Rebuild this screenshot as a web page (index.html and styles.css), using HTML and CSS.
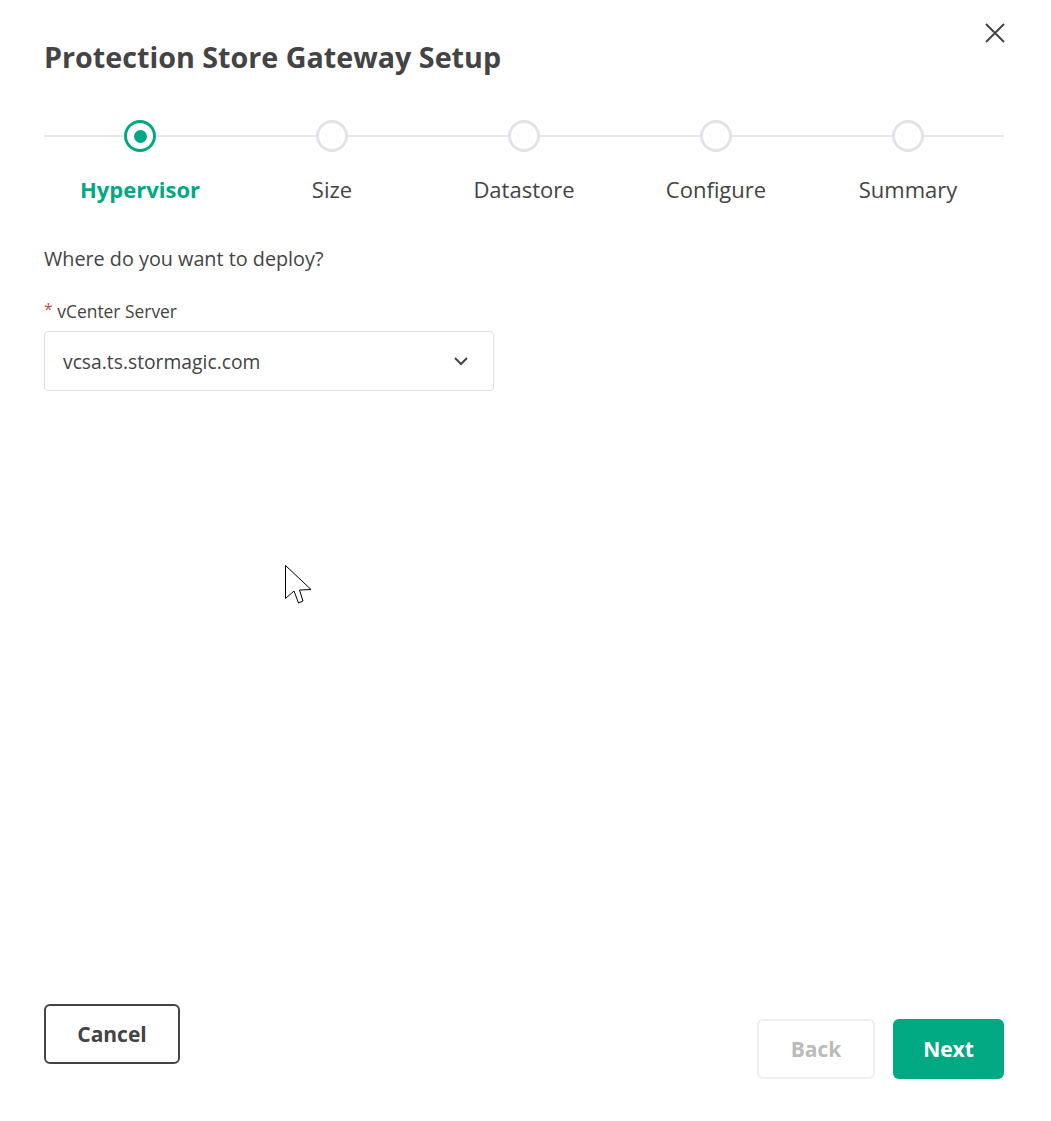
FILE: index.html
```html
<!DOCTYPE html>
<html lang="en">
<head>
    <meta charset="UTF-8">
    <meta name="viewport" content="width=device-width, initial-scale=1.0">
    <title>Protection Store Gateway Setup</title>
    <link rel="stylesheet" href="styles.css">
</head>
<body>
    <div class="dialog">
        <div class="header">
            <h1>Protection Store Gateway Setup</h1>
            <button class="close-btn" aria-label="Close">
                <svg width="20" height="20" viewBox="0 0 20 20">
                    <path d="M1 1 L19 19 M19 1 L1 19" stroke="#444" stroke-width="2" fill="none"/>
                </svg>
            </button>
        </div>

        <ol class="stepper">
            <li class="step active"><span class="dot"></span><span class="step-label">Hypervisor</span></li>
            <li class="step"><span class="dot"></span><span class="step-label">Size</span></li>
            <li class="step"><span class="dot"></span><span class="step-label">Datastore</span></li>
            <li class="step"><span class="dot"></span><span class="step-label">Configure</span></li>
            <li class="step"><span class="dot"></span><span class="step-label">Summary</span></li>
        </ol>

        <div class="content">
            <p class="question">Where do you want to deploy?</p>

            <label class="field-label" for="vcenter"><span class="required">*</span> vCenter Server</label>
            <div class="select" id="vcenter">
                <span>vcsa.ts.stormagic.com</span>
                <svg width="16" height="10" viewBox="0 0 16 10">
                    <path d="M2 2 L8 8 L14 2" stroke="#444" stroke-width="2" fill="none"/>
                </svg>
            </div>
        </div>

        <div class="footer">
            <button class="btn btn-cancel">Cancel</button>
            <div class="nav-buttons">
                <button class="btn btn-back" disabled>Back</button>
                <button class="btn btn-next">Next</button>
            </div>
        </div>

        <svg class="cursor" width="40" height="50" viewBox="0 0 40 50">
            <path d="M5.5 5.5 L5.5 38.5 L14 31 L18.5 43 L23 41 L19.5 30 L31 29.5 Z" fill="#fff" stroke="#000" stroke-width="1"/>
        </svg>
    </div>
</body>
</html>
```

FILE: styles.css
```css
body {
    margin: 0;
    font-family: "Open Sans", "Noto Sans", sans-serif;
    color: #444;
    background: #fff;
}

.dialog {
    position: relative;
    box-sizing: border-box;
    height: 1121px;
    padding: 0 47px 42px 44px;
    display: flex;
    flex-direction: column;
}

.header {
    display: flex;
    justify-content: space-between;
    align-items: flex-start;
    padding-top: 23px;
}

.header h1 {
    margin: 16px 0 0 0;
    font-size: 28.7px;
    line-height: 36px;
    font-weight: 700;
    color: #444;
}

.close-btn {
    width: 20px;
    height: 20px;
    padding: 0;
    margin-right: -1px;
    border: none;
    background: none;
    cursor: pointer;
}

.close-btn svg {
    display: block;
}

.stepper {
    position: relative;
    display: flex;
    list-style: none;
    margin: 45px 0 0 0;
    padding: 0;
}

.stepper::before {
    content: "";
    position: absolute;
    left: 0;
    right: 0;
    top: 15px;
    height: 2px;
    background-color: #e6e7eb;
}

.step {
    position: relative;
    flex: 1;
    display: flex;
    flex-direction: column;
    align-items: center;
    gap: 23px;
}

.dot {
    box-sizing: border-box;
    width: 32px;
    height: 32px;
    border: 3px solid #e1e3e8;
    border-radius: 50%;
    background: #fff;
    display: flex;
    justify-content: center;
    align-items: center;
}

.step-label {
    font-size: 22px;
    line-height: 28px;
    color: #444;
}

.step.active .dot {
    border-color: #01a982;
}

.step.active .dot::after {
    content: "";
    width: 13px;
    height: 13px;
    border-radius: 50%;
    background-color: #01a982;
}

.step.active .step-label {
    color: #01a982;
    font-weight: 700;
}

.content {
    flex: 1;
    display: flex;
    flex-direction: column;
    align-items: flex-start;
}

.question {
    margin: 44px 0 0 0;
    font-size: 19.8px;
    line-height: 24px;
}

.field-label {
    margin-top: 29px;
    font-size: 17.4px;
    line-height: 22px;
}

.required {
    color: #c54e4b;
    font-size: 16px;
    vertical-align: top;
    line-height: 18px;
}

.select {
    box-sizing: border-box;
    width: 450px;
    height: 60px;
    margin-top: 9px;
    padding: 0 24px 0 18px;
    border: 1px solid #e0e0e0;
    border-radius: 4px;
    display: flex;
    justify-content: space-between;
    align-items: center;
    font-size: 19.3px;
}

.footer {
    display: flex;
    justify-content: space-between;
    align-items: flex-end;
}

.nav-buttons {
    display: flex;
    gap: 18px;
}

.btn {
    box-sizing: border-box;
    height: 60px;
    padding-bottom: 2px;
    border-radius: 6px;
    font-family: inherit;
    font-size: 21px;
    font-weight: 700;
    cursor: pointer;
}

.btn-cancel {
    width: 136px;
    margin-bottom: 15px;
    border: 2px solid #444;
    background: #fff;
    color: #444;
}

.btn-back {
    width: 118px;
    border: 2px solid #efefef;
    background: #fff;
    color: #bbb;
    cursor: default;
}

.btn-next {
    width: 111px;
    border: none;
    background-color: #01a982;
    color: #fff;
}

.cursor {
    position: absolute;
    left: 280px;
    top: 560px;
    pointer-events: none;
}
```
